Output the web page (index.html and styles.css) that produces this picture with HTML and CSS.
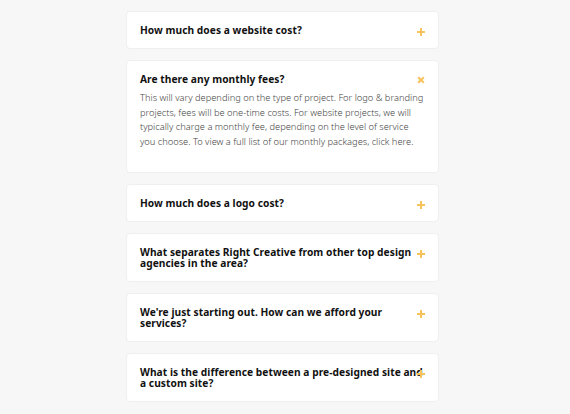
FILE: index.html
```html
<!DOCTYPE html>
<html lang="en">
<head>
<meta charset="utf-8">
<title>FAQ</title>
<link rel="stylesheet" href="styles.css">
</head>
<body>
<div class="faq">
  <div class="item">
    <div class="head"><h3 class="q">How much does a website cost?</h3><span class="icon plus"></span></div>
  </div>
  <div class="item open">
    <div class="head"><h3 class="q">Are there any monthly fees?</h3><span class="icon close"></span></div>
    <p class="a">This will vary depending on the type of project. For logo &amp; branding projects, fees will be one-time costs. For website projects, we will typically charge a monthly fee, depending on the level of service you choose. To view a full list of our monthly packages, click here.</p>
  </div>
  <div class="item">
    <div class="head"><h3 class="q">How much does a logo cost?</h3><span class="icon plus"></span></div>
  </div>
  <div class="item">
    <div class="head"><h3 class="q">What separates Right Creative from other top design agencies in the area?</h3><span class="icon plus"></span></div>
  </div>
  <div class="item">
    <div class="head"><h3 class="q">We're just starting out. How can we afford your services?</h3><span class="icon plus"></span></div>
  </div>
  <div class="item">
    <div class="head"><h3 class="q">What is the difference between a pre-designed site and a custom site?</h3><span class="icon plus"></span></div>
  </div>
</div>
</body>
</html>
```

FILE: styles.css
```css
html, body {
  margin: 0;
  padding: 0;
  background: #f7f7f7;
}
body {
  font-family: "Noto Sans", "Open Sans", sans-serif;
}
.faq {
  width: 313px;
  margin-left: 126px;
  padding-top: 11px;
  display: flex;
  flex-direction: column;
  gap: 11px;
}
.item {
  background: #fff;
  border: 1px solid #efefef;
  border-radius: 4px;
  padding: 13px 14px 12px 13px;
}
.head {
  position: relative;
}
.q {
  margin: 0;
  font-size: 10.2px;
  line-height: 11px;
  font-weight: 700;
  color: #111;
  max-width: 285px;
  letter-spacing: 0.05px;
}
.icon {
  position: absolute;
  right: -1px;
  top: 3px;
  width: 8px;
  height: 8px;
}
.icon::before, .icon::after {
  content: "";
  position: absolute;
  left: 0;
  top: 3px;
  width: 8px;
  height: 2px;
  background: #f7c25c;
}
.icon.plus::after { transform: rotate(90deg); }
.icon.close::before { transform: rotate(45deg); }
.icon.close::after { transform: rotate(-45deg); }
.icon.close { top: 2px; }
.item.open { padding-bottom: 23px; }
.a {
  margin: 6px 0 0;
  font-size: 9.3px;
  line-height: 14.5px;
  font-weight: 300;
  color: #444;
  max-width: 284px;
}
```
